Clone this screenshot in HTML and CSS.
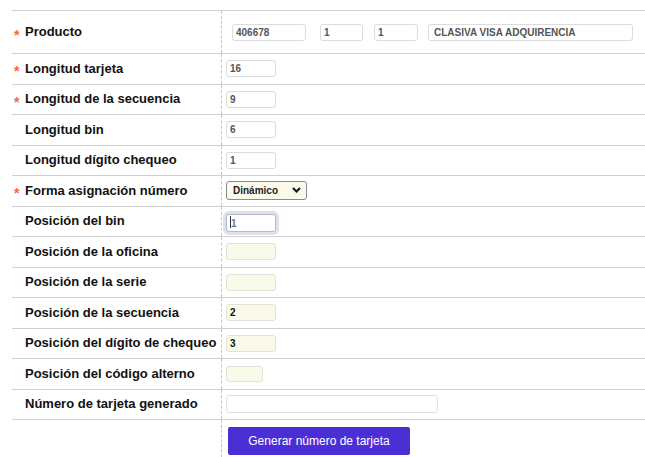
FILE: index.html
```html
<!DOCTYPE html>
<html lang="es">
<head>
<meta charset="utf-8">
<title>Generar número de tarjeta</title>
<link rel="stylesheet" href="styles.css">
</head>
<body>
<div class="form">
  <div class="row row-tall">
    <div class="label"><span class="req">*</span>Producto</div>
    <div class="value">
      <input class="inp w-code gap-wide" type="text" value="406678">
      <input class="inp w-small" type="text" value="1">
      <input class="inp w-small" type="text" value="1">
      <input class="inp w-name" type="text" value="CLASIVA VISA ADQUIRENCIA">
    </div>
  </div>
  <div class="row">
    <div class="label"><span class="req">*</span>Longitud tarjeta</div>
    <div class="value"><input class="inp w-short" type="text" value="16"></div>
  </div>
  <div class="row">
    <div class="label"><span class="req">*</span>Longitud de la secuencia</div>
    <div class="value"><input class="inp w-short" type="text" value="9"></div>
  </div>
  <div class="row">
    <div class="label"><span class="req none"></span>Longitud bin</div>
    <div class="value"><input class="inp w-short" type="text" value="6"></div>
  </div>
  <div class="row">
    <div class="label"><span class="req none"></span>Longitud dígito chequeo</div>
    <div class="value"><input class="inp w-short" type="text" value="1"></div>
  </div>
  <div class="row">
    <div class="label"><span class="req">*</span>Forma asignación número</div>
    <div class="value">
      <span class="select-wrap">
        <select class="sel"><option>Dinámico</option></select>
        <svg class="chev" width="9" height="6" viewBox="0 0 9 6"><path d="M1 1 L4.5 4.5 L8 1" fill="none" stroke="#1a1a1a" stroke-width="2.2"/></svg>
      </span>
    </div>
  </div>
  <div class="row">
    <div class="label"><span class="req none"></span>Posición del bin</div>
    <div class="value">
      <span class="focus-wrap">
        <input class="inp w-short focused" type="text" value="1">
        <span class="caret"></span>
      </span>
    </div>
  </div>
  <div class="row">
    <div class="label"><span class="req none"></span>Posición de la oficina</div>
    <div class="value"><input class="inp w-short yellow" type="text" value=""></div>
  </div>
  <div class="row">
    <div class="label"><span class="req none"></span>Posición de la serie</div>
    <div class="value"><input class="inp w-short yellow" type="text" value=""></div>
  </div>
  <div class="row">
    <div class="label"><span class="req none"></span>Posición de la secuencia</div>
    <div class="value"><input class="inp w-short yellow dark" type="text" value="2"></div>
  </div>
  <div class="row">
    <div class="label"><span class="req none"></span>Posición del dígito de chequeo</div>
    <div class="value"><input class="inp w-short yellow dark" type="text" value="3"></div>
  </div>
  <div class="row">
    <div class="label"><span class="req none"></span>Posición del código alterno</div>
    <div class="value"><input class="inp w-alt yellow" type="text" value=""></div>
  </div>
  <div class="row">
    <div class="label"><span class="req none"></span>Número de tarjeta generado</div>
    <div class="value"><input class="inp w-gen gen" type="text" value=""></div>
  </div>
  <div class="row row-btn">
    <div class="label"></div>
    <div class="value value-btn"><button class="btn" type="button">Generar número de tarjeta</button></div>
  </div>
</div>
</body>
</html>
```

FILE: styles.css
```css
* { box-sizing: border-box; }

html, body {
  margin: 0;
  padding: 0;
  background: #ffffff;
  overflow: hidden;
}

body {
  font-family: "Liberation Sans", Arial, sans-serif;
  color: #111111;
}

.form {
  margin: 10px 0 0 12px;
  width: 633px;
  border-top: 1px solid #cfcfcf;
}

.row {
  display: flex;
  height: 30.5px;
  border-bottom: 1px solid #cfcfcf;
}

.row-tall { height: 43px; }

.row-btn {
  height: 37px;
  border-bottom: none;
}

.label {
  width: 210px;
  flex: none;
  display: flex;
  align-items: center;
  padding-left: 1px;
  padding-bottom: 1px;
  border-right: 1px dashed #c4c4c4;
  font-size: 13px;
  font-weight: bold;
  color: #111111;
  white-space: nowrap;
}

.req {
  width: 12px;
  flex: none;
  color: #f4683c;
  font-size: 14px;
  font-weight: bold;
  line-height: 1;
  padding-left: 1px;
  padding-top: 6px;
}

.value {
  flex: 1;
  display: flex;
  align-items: center;
  padding-left: 4px;
}

.value-btn {
  align-items: flex-start;
  padding-top: 7px;
}

.inp {
  height: 17px;
  border: 1px solid #dcdcdc;
  border-radius: 3px;
  background: #ffffff;
  font-family: "Liberation Sans", Arial, sans-serif;
  font-size: 10px;
  font-weight: bold;
  color: #555555;
  padding: 0 3px;
  margin: 0;
  outline: none;
}

.w-code { width: 74px; margin-left: 6px; margin-right: 14px; }
.w-small { width: 43px; margin-right: 11px; }
.w-small + .w-small { width: 44px; margin-right: 10px; }
.w-name { width: 205px; padding-left: 5px; }
.w-short { width: 50px; }
.w-alt { width: 37px; height: 16px; }
.w-gen { width: 212px; height: 18px; border-color: #e0e0e8; }

.yellow {
  background: #fafaeb;
  border-color: #e2e2da;
}

.dark { color: #111111; }

.select-wrap {
  position: relative;
  display: inline-block;
  height: 19px;
  margin-top: -2px;
}

.sel {
  appearance: none;
  -webkit-appearance: none;
  width: 81px;
  height: 19px;
  border: 1px solid #8a8a8a;
  border-radius: 3px;
  background: #fafaeb;
  font-family: "Liberation Sans", Arial, sans-serif;
  font-size: 10px;
  font-weight: bold;
  color: #1a1a1a;
  padding: 0 0 0 6px;
  margin: 0;
  outline: none;
}

.chev {
  position: absolute;
  right: 6px;
  top: 7px;
  pointer-events: none;
}

.focus-wrap {
  position: relative;
  display: inline-block;
  height: 18px;
  margin-top: 1px;
}

.focused {
  height: 18px;
  border-color: #b4b8c8;
  box-shadow: 0 0 0 3px #dfe1ea;
  color: #6b7196;
  padding-left: 4px;
}

.caret {
  position: absolute;
  left: 4px;
  top: 3px;
  width: 1px;
  height: 12px;
  background: #333333;
}

.btn {
  margin-left: 2px;
  width: 182px;
  height: 28px;
  border: none;
  border-radius: 2px;
  background: #4b2fd5;
  color: #ffffff;
  font-family: "Liberation Sans", Arial, sans-serif;
  font-size: 12px;
  font-weight: normal;
  padding: 0;
}
```
